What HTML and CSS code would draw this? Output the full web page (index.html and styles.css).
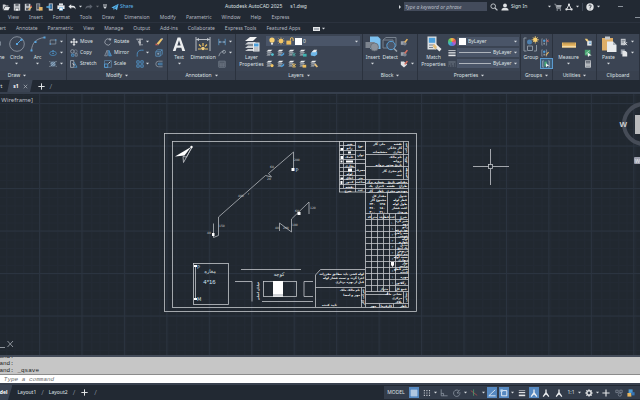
FILE: index.html
```html
<!DOCTYPE html>
<html lang="en">
<head>
<meta charset="UTF-8">
<title>Autodesk AutoCAD 2025 - s1.dwg</title>
<link rel="stylesheet" href="styles.css">
</head>
<body>

<!-- icon sprite -->
<svg class="sprite" aria-hidden="true">
    <symbol id="caret" viewBox="0 0 4 4"><path d="M0 1h4L2 3.4z" fill="#d5d9de"/></symbol>
    <symbol id="open" viewBox="0 0 10 10"><path d="M1 8V2h3l1 1h3v1.4H3.4L1.6 8z" fill="#cfd2d6"/><path d="M3.8 5H10L8 9H1.8z" fill="#e4e6e8"/></symbol>
    <symbol id="save" viewBox="0 0 10 10"><path d="M1 1h8v8.5H1z" fill="#c9ccd0"/><path d="M3 1h4v3H3zM2.8 6h4.4v3.5H2.8z" fill="#6b7178"/><path d="M3.4 7h3.2v2.5H3.4z" fill="#f0f0f0"/></symbol>
    <symbol id="saveas" viewBox="0 0 10 10"><path d="M1 1h7v8.5H1z" fill="#c9ccd0"/><path d="M3 1h3v3H3zM2.5 6h4v3h-4z" fill="#555c66"/><path d="M5 8l3.5-4L10 5.300 6.500 9z" fill="#e7b96e"/><circle cx="9" cy="4" r="1" fill="#d9534f"/></symbol>
    <symbol id="webopen" viewBox="0 0 10 10"><path d="M1.500 0.500h5v9h-5z" fill="#9a9da3"/><path d="M2.500 1.500h3v6h-3z" fill="#565d68"/><path d="M5 5h4.500v4.500H5z" fill="#e3b566"/></symbol>
    <symbol id="websave" viewBox="0 0 10 10"><path d="M3.500 0.500h5v9h-5z" fill="#c3c7cc"/><path d="M4.500 1.500h3v6h-3z" fill="#3a6f9c"/><path d="M0.500 4h3V2.500L6 5 3.500 7.500V6h-3z" fill="#59b1e8"/></symbol>
    <symbol id="print" viewBox="0 0 10 10"><path d="M2.500 0.500h5V3h-5z" fill="#dfe2e5"/><path d="M0.500 3h9v4.500h-9z" fill="#e9ebed"/><path d="M2.500 5.500h5v4h-5z" fill="#6bb2e2"/><path d="M3.200 6.500h3.600v2.500H3.200z" fill="#fff"/></symbol>
    <symbol id="undo" viewBox="0 0 10 10"><path d="M0.500 4.500L4 1.500v2h2c2.500 0 3.500 1.500 3.500 4.500C8.500 6 7.500 5.500 6 5.500H4v2z" fill="#e6e8ea"/></symbol>
    <symbol id="redo" viewBox="0 0 10 10"><path d="M9.500 4.500L6 1.500v2H4C1.500 3.500 0.500 5 0.500 8 1.500 6 2.500 5.500 4 5.500h2v2z" fill="#5b626d"/></symbol>
    <symbol id="more" viewBox="0 0 4 6"><path d="M0 0.500h4v1H0zM0 2.600h4L2 5z" fill="#d5d9de"/></symbol>
    <symbol id="plane" viewBox="0 0 10 10"><path d="M0.500 5.500L9.500 1 7.500 9 4.800 6.800 3.500 9 3 6.500z" fill="#5db8ee"/><path d="M3 6.500L9.500 1 4.800 6.800z" fill="#2d6f9e"/></symbol>
    <symbol id="lens" viewBox="0 0 10 10"><circle cx="4" cy="4" r="2.900" fill="none" stroke="#c0c4c9" stroke-width="1.200"/><path d="M6.200 6.200L9.300 9.300" stroke="#c0c4c9" stroke-width="1.500"/></symbol>
    <symbol id="user" viewBox="0 0 10 10"><circle cx="5" cy="3" r="2.400" fill="#dfe1e4"/><path d="M0.500 9.500C0.500 6.500 3 6 5 6s4.500 0.500 4.500 3.500z" fill="#dfe1e4"/></symbol>
    <symbol id="cart" viewBox="0 0 10 10"><path d="M0.500 1.500h1.600L3.500 7h5" fill="none" stroke="#a3a8af"/><path d="M2.600 2.500h7L8.500 6h-5z" fill="#a3a8af"/><circle cx="4" cy="8.700" r="0.900" fill="#a3a8af"/><circle cx="8" cy="8.700" r="0.900" fill="#a3a8af"/></symbol>
    <symbol id="appstore" viewBox="0 0 10 10"><path d="M5 2L2 8h6z" fill="none" stroke="#dfe1e4" stroke-width="1.200"/><circle cx="5" cy="1.800" r="1.300" fill="#dfe1e4"/><circle cx="1.800" cy="8" r="1.400" fill="#dfe1e4"/><circle cx="8.200" cy="8" r="1.400" fill="#dfe1e4"/></symbol>
    <symbol id="help" viewBox="0 0 10 10"><circle cx="5" cy="5" r="4.600" fill="#e4e6e8"/><path d="M3.600 3.900C3.600 2 6.500 2 6.500 3.800 6.500 4.900 5 4.900 5 6.200M5 7v1" fill="none" stroke="#252c37" stroke-width="1.100"/></symbol>

    <symbol id="pline" viewBox="0 0 16 16"><path d="M3 14V3h5a4.500 4.500 0 0 1 0 9H6" fill="none" stroke="#8d97a5"/></symbol>
    <symbol id="circle" viewBox="0 0 16 16"><circle cx="8" cy="8" r="7.300" fill="none" stroke="#97a0ac" stroke-width="0.800"/><path d="M8 8l4-4" stroke="#57a5e0"/><path d="M7 7h2v2H7zM11.500 2.800h2v2h-2z" fill="#57a5e0"/></symbol>
    <symbol id="arc" viewBox="0 0 16 16"><path d="M1.500 14.500C2 7 6 2.500 14.500 1.500" fill="none" stroke="#97a0ac" stroke-width="0.800"/><path d="M0.500 13.500h2v2h-2zM4.500 5h2v2h-2zM13.500 0.500h2v2h-2z" fill="#57a5e0"/></symbol>
    <symbol id="rect" viewBox="0 0 10 10"><path d="M1.500 2.500h7v5h-7z" fill="none" stroke="#8f99a6" stroke-width="0.900"/><path d="M0.700 6.800h1.600v1.600H0.700zM7.700 1.600h1.600v1.600H7.700z" fill="#57a5e0"/></symbol>
    <symbol id="ellipse" viewBox="0 0 10 10"><ellipse cx="5" cy="5.500" rx="4.200" ry="2.700" fill="none" stroke="#4b93c9" stroke-width="0.900"/><path d="M4.300 4.800h1.500v1.500H4.300zM4.300 1.500h1.500V3H4.300z" fill="#57a5e0"/></symbol>
    <symbol id="hatch" viewBox="0 0 10 10"><path d="M2 2h6v6H2z" fill="#62809c"/><path d="M2 5l3-3M2 8l6-6M5 8l3-3" stroke="#b9c3cf" stroke-width="0.700"/><path d="M0.500 2h1M8.500 2h1M0.500 8h1M8.500 8h1" stroke="#aab2bd"/></symbol>
    <symbol id="move" viewBox="0 0 10 10"><path d="M5 0l2 2.300H5.700v2h2V3L10 5 7.700 7V5.700h-2v2H7L5 10 3 7.700h1.300v-2h-2V7L0 5l2.300-2v1.300h2v-2H3z" fill="#e8eaec"/></symbol>
    <symbol id="copy" viewBox="0 0 10 10"><circle cx="3" cy="3" r="2.200" fill="none" stroke="#98a2af"/><circle cx="7" cy="3" r="2" fill="none" stroke="#7f8a98" stroke-width="0.800"/><path d="M2 6.500h3v2.500H2z" fill="none" stroke="#4f9bd3"/><path d="M6.500 5.500h2.500v3.500H6.500z" fill="none" stroke="#98a2af" stroke-width="0.800"/></symbol>
    <symbol id="stretch" viewBox="0 0 10 10"><path d="M0.700 0.700h4v8.500h-4z" fill="none" stroke="#b4bbc4" stroke-width="0.900"/><path d="M5 2.500L8.800 9H5" fill="none" stroke="#4f9bd3"/><path d="M3 4.500l3 2" stroke="#e4e6e8"/></symbol>
    <symbol id="rotate" viewBox="0 0 10 10"><path d="M8.300 7A3.900 3.900 0 1 1 7 1.700" fill="none" stroke="#a9b0ba"/><path d="M6 0.300L9.500 1 7.500 4z" fill="#a9b0ba"/></symbol>
    <symbol id="mirror" viewBox="0 0 10 10"><path d="M4 1.500V8.500H0.800z" fill="none" stroke="#98a2af" stroke-width="0.900"/><path d="M6 1.500V8.500h3.200z" fill="#3c6f98" stroke="#57a5e0" stroke-width="0.900"/></symbol>
    <symbol id="scale" viewBox="0 0 10 10"><path d="M0.700 0.700h8.500v8.500H0.700z" fill="none" stroke="#5c86aa" stroke-width="0.900"/><path d="M0.700 5h4v4.200h-4z" fill="none" stroke="#57a5e0"/><path d="M5.500 4.500L8 2" stroke="#dfe1e4"/></symbol>
    <symbol id="trim" viewBox="0 0 10 10"><path d="M0.500 1.500h3M6.500 1.500h2" stroke="#dfe1e4"/><path d="M5 0.500V9.500" stroke="#e4e6e8" stroke-width="1.400"/><path d="M2 3.500l4 2.500M2.500 6h3" stroke="#c3c8ce"/><path d="M6.500 8.500h2" stroke="#c3c8ce"/></symbol>
    <symbol id="erase" viewBox="0 0 10 10"><path d="M2 7L7.500 0.500 9.500 2 4.500 8.500z" fill="#ecc46e"/><path d="M7.500 0.500L9.500 2l0.500-1.500z" fill="#fff"/><path d="M1 6.500l3.500 2.500H0.500z" fill="#d8625a"/></symbol>
    <symbol id="fillet" viewBox="0 0 10 10"><path d="M1.500 9.500V7A5 5 0 0 1 7 1.500h2.500" fill="none" stroke="#4f9bd3"/></symbol>
    <symbol id="cube" viewBox="0 0 10 10"><path d="M1 3.500h5.500v5.500H1zM1 3.500l2-2.500h6L6.500 3.500M9 1v5.500L6.500 9" fill="none" stroke="#5a95c4"/><circle cx="4" cy="6" r="1.300" fill="#8ea3b6"/></symbol>
    <symbol id="array" viewBox="0 0 10 10"><path d="M1 1h3v3H1zM6 1h3v3H6zM1 6h3v3H1zM6 6h3v3H6z" fill="none" stroke="#4f8ebf" stroke-width="1.200"/></symbol>
    <symbol id="offset" viewBox="0 0 10 10"><path d="M9.500 1.500H4.500a3.500 3.500 0 0 0 0 7H9.500" fill="none" stroke="#8f99a6"/><path d="M9.500 4H5a1 1 0 0 0 0 2h4.500" fill="none" stroke="#4f9bd3"/></symbol>

    <symbol id="text" viewBox="0 0 16 16"><path d="M1.800 15L6.600 1.500h2.800L14.200 15h-2.900l-1-3.200H5.600L4.600 15zM6.300 9.400h3.400L8 4.300z" fill="#eceef0"/></symbol>
    <symbol id="dimension" viewBox="0 0 16 16"><path d="M1 1v14M15 1v14" stroke="#c5cad0" stroke-width="0.900"/><path d="M1.500 3.500h13" stroke="#c5cad0" stroke-width="0.900"/><path d="M1 3.500l3-1.500v3zM15 3.500l-3-1.500v3z" fill="#c5cad0"/><path d="M8 7v3M4 8.500l2 2M12 8.500l-2 2M3 13h3M10 13h3" stroke="#e9be62" stroke-width="1.200"/><circle cx="8" cy="12.500" r="1.800" fill="#f0cc7b"/></symbol>
    <symbol id="linear" viewBox="0 0 10 10"><path d="M1 1v8M9 1v8M1 5h8" stroke="#5a9bcc"/><path d="M1 5l2-1.500v3zM9 5L7 3.500v3z" fill="#aab2bd"/></symbol>
    <symbol id="leader" viewBox="0 0 10 10"><path d="M1 9C2 5 4 3 7 3" fill="none" stroke="#a0a9b4"/><circle cx="7.500" cy="3.500" r="1.900" fill="none" stroke="#a0a9b4"/></symbol>
    <symbol id="tableicon" viewBox="0 0 10 10"><path d="M1 1.500h8V9H1zM1 3.800h8M1 6.300h8M3.700 4v5M6.400 4v5" fill="none" stroke="#7d8794" stroke-width="0.900"/></symbol>

    <symbol id="layers" viewBox="0 0 16 16"><path d="M1 5l5-4h7l-4 4z" fill="#f2f3f4"/><path d="M1 8.500L4 6h8l-3 2.500zM1 12l3-2.500h7L9 12zM1 15l3-2h6l-1 2z" fill="#c9cdd2"/><path d="M9 6.500h6.500V15.500H9z" fill="#e8eaec"/><path d="M10 7.500h4.500v3H10z" fill="#4b9fdc"/><path d="M10 12h4.500M10 14h4.500" stroke="#7c838d" stroke-width="0.800"/></symbol>
    <symbol id="bulb" viewBox="0 0 10 10"><circle cx="5" cy="3.800" r="3.300" fill="#f6cf73"/><path d="M3.700 7.200h2.600v2.300H3.700z" fill="#e2e4e6"/></symbol>
    <symbol id="sun" viewBox="0 0 10 10"><circle cx="5" cy="5" r="2.800" fill="#f3c766"/><path d="M5 0.500v9M0.500 5h9M1.800 1.800l6.400 6.400M8.200 1.800L1.800 8.200" stroke="#f3c766" stroke-width="0.800"/></symbol>
    <symbol id="lock" viewBox="0 0 10 10"><path d="M0.500 4.500h6V9.500h-6z" fill="#eebe5d"/><path d="M5.500 4.500V2.500a1.700 1.700 0 0 1 3.400 0V5" fill="none" stroke="#eebe5d" stroke-width="1.200"/></symbol>
    <symbol id="lay" viewBox="0 0 10 10"><path d="M0.500 3L3 1h5L5.500 3z" fill="#e8eaec"/><path d="M0.500 5.500L2 4h5.500L6 5.500zM0.500 8L2 6.500h4L5 8z" fill="#aeb4bc"/></symbol>

    <symbol id="insert" viewBox="0 0 16 16"><path d="M5 0.500h8l2.500 2.500v10H5z" fill="#7cc0ef"/><path d="M0.500 6h9v6h-9z" fill="#7d848e"/><circle cx="9.500" cy="11" r="4" fill="#8c939c" stroke="#5d656f" stroke-width="0.700"/></symbol>
    <symbol id="detect" viewBox="0 0 16 16"><path d="M1 4l3-2.500h10V10l-2.500 2H1z" fill="none" stroke="#78828f"/><path d="M1 4h10v8" fill="none" stroke="#78828f"/><circle cx="9" cy="9.500" r="4.200" fill="#4a5668" stroke="#58a2da"/><path d="M12 12.500l3 3" stroke="#9ca4ae" stroke-width="1.500"/></symbol>
    <symbol id="blk" viewBox="0 0 10 10"><path d="M1 4h5v4.500H1z" fill="#9aa1ab"/><circle cx="6" cy="7" r="2.300" fill="#7c8490"/><path d="M5 5l3.500-4L10 2 7 6z" fill="#e7b661"/></symbol>
    <symbol id="blkedit" viewBox="0 0 10 10"><path d="M1 4h5v4.500H1z" fill="#9aa1ab"/><circle cx="6" cy="7" r="2.300" fill="#7c8490"/><path d="M5 5l3.500-4L10 2 7 6z" fill="#db7161"/></symbol>
    <symbol id="tag" viewBox="0 0 10 10"><path d="M1 2h4l4 3.500L5 9.500 1 6z" fill="#dfe1e4"/><path d="M5 5l3.500-4L10 2 7 6z" fill="#db7161"/></symbol>

    <symbol id="match" viewBox="0 0 16 16"><path d="M1.500 0.500h9v13h-9z" fill="#dde0e3"/><path d="M2.800 1.800h6.400v5H2.800z" fill="#4b9fdc"/><path d="M3 9h6M3 11.500h4" stroke="#7c838d"/><path d="M7 9.500l2.500-2L15.500 13l-2 2.500z" fill="#ececec"/><path d="M6.500 10l2-2 2.500 3-1.500 2.500z" fill="#e5bf7a"/></symbol>
    <symbol id="lweight" viewBox="0 0 10 10"><path d="M0.500 2h9" stroke="#e4e6e8"/><path d="M0.500 4.800h9" stroke="#e4e6e8" stroke-width="1.600"/><path d="M0.500 8h9" stroke="#e4e6e8" stroke-width="2"/></symbol>
    <symbol id="ltype" viewBox="0 0 10 10"><path d="M0.500 2.500h9" stroke="#828b97"/><path d="M0.500 5h9" stroke="#828b97" stroke-dasharray="3 1"/><path d="M0.500 7.500h9" stroke="#828b97" stroke-dasharray="1 1"/></symbol>

    <symbol id="group" viewBox="0 0 16 16"><path d="M3.500 2H1v13h2.500M11 15h2.500V9" fill="none" stroke="#8a94a1"/><circle cx="6.500" cy="6" r="2.500" fill="#4d7fae"/><path d="M4.500 10h5v4.500h-5z" fill="none" stroke="#8a94a1"/><circle cx="12.300" cy="3.800" r="2.200" fill="#f6cf73"/><path d="M12.300 0v7.600M8.500 3.800H16M9.800 1.200l5 5M14.800 1.200l-5 5" stroke="#f6cf73" stroke-width="0.700"/></symbol>
    <symbol id="grp1" viewBox="0 0 10 10"><path d="M2 1H1v8h1M6 1h1v8H6" fill="none" stroke="#8a94a1"/><circle cx="4" cy="3.500" r="1.500" fill="#4f9bd3"/><path d="M3 6h2v2H3z" fill="#8a94a1"/><path d="M7 2l2.500 3M9.500 2L7 5" stroke="#d9635a"/></symbol>
    <symbol id="grp2" viewBox="0 0 10 10"><path d="M2 1H1v8h1M6 1h1v8H6" fill="none" stroke="#8a94a1"/><circle cx="4" cy="3.500" r="1.500" fill="#4f9bd3"/><path d="M3 6h2v2H3z" fill="#8a94a1"/><path d="M6 8l3.500-4" stroke="#e7b661" stroke-width="1.400"/></symbol>
    <symbol id="grp3" viewBox="0 0 10 10"><path d="M2 1H1v8h1M8 1h1v8H8" fill="none" stroke="#b5bdc7"/><path d="M3 2h3v6H3z" fill="#4aa97a"/><path d="M5 4l4 3.500H6.500L5 9.500z" fill="#f2f3f4"/></symbol>
    <symbol id="measure" viewBox="0 0 16 16"><path d="M1 6.500h14v5H1z" fill="#e9b864"/><path d="M3 6.500v2M5 6.500v2M7 6.500v2M9 6.500v2M11 6.500v2M13 6.500v2" stroke="#7d6133" stroke-width="0.600"/><path d="M1 10h14v1.500H1z" fill="#f5dba6"/></symbol>
    <symbol id="paint" viewBox="0 0 10 10"><path d="M4 3.500h5.500v6H4z" fill="#e9ebed"/><path d="M1 1h3l2 3H3z" fill="#f0cc7b"/><path d="M6 5h3M6 7h3" stroke="#4f9bd3"/></symbol>
    <symbol id="qselect" viewBox="0 0 10 10"><path d="M1 1h7v7H1z" fill="#46a36f"/><path d="M2 6l5-4" stroke="#a9e0c2"/><path d="M4.500 4.500L9.500 8H7L5 10z" fill="#f2f3f4"/></symbol>
    <symbol id="calc" viewBox="0 0 10 10"><path d="M1.500 0.500h7v9h-7z" fill="#dcdfe2"/><path d="M2.500 1.500h5v1.700h-5zM2.500 4.500h5M2.500 6.300h5M2.500 8h5" fill="#59616c" stroke="#59616c" stroke-width="0.700"/></symbol>
    <symbol id="paste" viewBox="0 0 16 16"><path d="M1 2h11v12.500H1z" fill="#dfae67"/><path d="M4 0.500h5v3H4z" fill="#c4c8cd"/><path d="M6 5.500h6l3.500 3.500v7H6z" fill="#e9ebed"/><path d="M12 5.500V9h3.500z" fill="#aeb4bc"/></symbol>
    <symbol id="cut" viewBox="0 0 10 10"><path d="M1 1h6v8H1z" fill="#c3c8ce"/><path d="M2 3h4M2 5h3" stroke="#59616c" stroke-width="0.800"/><path d="M5 5l4 4M9 5L5 9" stroke="#e4e6e8"/></symbol>
    <symbol id="copyclip" viewBox="0 0 10 10"><path d="M1 0.500h5v6H1z" fill="#9aa1ab"/><path d="M3 2.500h4L9 4.500v5H3z" fill="#e4e6e8"/></symbol>

    <symbol id="sgrid" viewBox="0 0 10 10"><path d="M0.500 2.500h9M0.500 5h9M0.500 7.500h9M2.500 0.500v9M5 0.500v9M7.500 0.500v9" stroke="#fff" stroke-width="0.800"/></symbol>
    <symbol id="ssnap" viewBox="0 0 10 10"><path d="M1 2h8M1 5h8M1 8h8" stroke="#c9cdd3" stroke-width="1.400" stroke-dasharray="1.400 1.800"/></symbol>
    <symbol id="sortho" viewBox="0 0 10 10"><path d="M1.500 0.500v8h8M1.500 5.500h3v3" fill="none" stroke="#8b95a2"/></symbol>
    <symbol id="spolar" viewBox="0 0 10 10"><path d="M8.500 6.500A4 4 0 1 1 7 2M5 5h4.500M5 5L8.500 1" fill="none" stroke="#8b95a2"/></symbol>
    <symbol id="siso" viewBox="0 0 10 10"><path d="M1 2l8 6" stroke="#b0504e"/><path d="M4.500 0.500v8" stroke="#4f9d71"/></symbol>
    <symbol id="strack" viewBox="0 0 10 10"><path d="M1 8.500L9 1M1 8.500h8.500" stroke="#fff" stroke-width="0.900"/></symbol>
    <symbol id="sosnap" viewBox="0 0 10 10"><path d="M2 2h6.500v6.500H2z" fill="none" stroke="#fff"/><path d="M0.500 0.500h3v3h-3z" fill="#bcd9f2"/></symbol>
    <symbol id="slw" viewBox="0 0 10 10"><path d="M1 2h8" stroke="#e4e6e8" stroke-width="0.800"/><path d="M1 4.500h8" stroke="#e4e6e8" stroke-width="1.400"/><path d="M1 8h8" stroke="#e4e6e8" stroke-width="2"/></symbol>
    <symbol id="sanno" viewBox="0 0 10 10"><path d="M5 0.500V5M5 4.500L1.500 9.500M5 4.500l3.500 5" stroke="#eef0f2" stroke-width="1.600" fill="none"/><path d="M3 7h4" stroke="#eef0f2"/></symbol>
    <symbol id="sgear" viewBox="0 0 10 10"><circle cx="5" cy="5" r="2.700" fill="none" stroke="#e4e6e8" stroke-width="1.800"/><path d="M5 0.300v2M5 7.700v2M0.300 5h2M7.700 5h2M1.700 1.700l1.400 1.400M6.900 6.900l1.400 1.400M8.300 1.700L6.900 3.100M3.100 6.900L1.700 8.300" stroke="#e4e6e8" stroke-width="1.300"/></symbol>
    <symbol id="plus" viewBox="0 0 10 10"><path d="M5 0.500v9M0.500 5h9" stroke="#e4e6e8" stroke-width="1.400"/></symbol>
    <symbol id="sisolate" viewBox="0 0 10 10"><path d="M1 1.500h3v3H1zM6 1.500h3v3H6z" fill="none" stroke="#7d8794"/><circle cx="6" cy="7" r="2" fill="none" stroke="#7d8794"/></symbol>
    <symbol id="sgpu" viewBox="0 0 10 10"><path d="M2 0.500h5v4.500H2z" fill="#4f9bd3"/><path d="M0.500 5h5v4.500h-5z" fill="#e7b661"/><path d="M5.500 4h4v4h-4z" fill="#3474b5"/></symbol>
    <symbol id="close" viewBox="0 0 10 10"><path d="M1.500 1.500l7 7M8.500 1.500l-7 7" stroke="#b6bcc4" stroke-width="1.300"/></symbol>
</svg>

<header class="titlebar">
    <div class="quick">
        <button aria-label="Open"><svg class="ico"><use href="#open"/></svg></button>
        <button aria-label="Save"><svg class="ico"><use href="#save"/></svg></button>
        <button aria-label="Save As"><svg class="ico"><use href="#saveas"/></svg></button>
        <button aria-label="Open from Web"><svg class="ico"><use href="#webopen"/></svg></button>
        <button aria-label="Save to Web"><svg class="ico"><use href="#websave"/></svg></button>
        <button aria-label="Plot"><svg class="ico"><use href="#print"/></svg></button>
        <button aria-label="Undo"><svg class="ico"><use href="#undo"/></svg></button>
        <svg class="caret"><use href="#caret"/></svg>
        <button aria-label="Redo"><svg class="ico"><use href="#redo"/></svg></button>
        <svg class="caret dim"><use href="#caret"/></svg>
        <button class="more-btn" aria-label="Customize"><svg class="more"><use href="#more"/></svg></button>
        <a class="share" href="#"><svg class="ico"><use href="#plane"/></svg>Share</a>
    </div>
    <div class="doc-title"><span>Autodesk AutoCAD 2025</span><span>s1.dwg</span></div>
    <div class="account">
        <span class="tri"></span>
        <input class="search" type="text" placeholder="Type a keyword or phrase" aria-label="Search">
        <button aria-label="Search"><svg class="ico"><use href="#lens"/></svg></button>
        <button class="signin"><svg class="ico"><use href="#user"/></svg>Sign In</button>
        <svg class="caret gap-left"><use href="#caret"/></svg>
        <button aria-label="Store"><svg class="ico"><use href="#cart"/></svg></button>
        <button aria-label="Apps"><svg class="ico"><use href="#appstore"/></svg></button>
        <svg class="caret"><use href="#caret"/></svg>
        <span class="sep"></span>
        <button aria-label="Help"><svg class="ico"><use href="#help"/></svg></button>
        <svg class="caret"><use href="#caret"/></svg>
        <button class="minimize" aria-label="Minimize"></button>
    </div>
</header>

<nav class="menubar">
    <a href="#">View</a><a href="#">Insert</a><a href="#">Format</a><a href="#">Tools</a><a href="#">Draw</a><a href="#">Dimension</a><a href="#">Modify</a><a href="#">Parametric</a><a href="#">Window</a><a href="#">Help</a><a href="#">Express</a>
    <button class="minimize" aria-label="Minimize drawing"></button>
</nav>

<nav class="ribbon-tabs">
    <a href="#">Insert</a><a href="#">Annotate</a><a href="#">Parametric</a><a href="#">View</a><a href="#">Manage</a><a href="#">Output</a><a href="#">Add-ins</a><a href="#">Collaborate</a><a href="#">Express Tools</a><a href="#">Featured Apps</a>
    <button class="ribbon-toggle" aria-label="Minimize ribbon"><span></span><svg class="caret"><use href="#caret"/></svg></button>
</nav>

<main class="ribbon">
    <section class="panel">
        <div class="tools right">
            <button class="big"><svg class="pic"><use href="#pline"/></svg>Polyline<svg class="caret"><use href="#caret"/></svg></button>
            <button class="big"><svg class="pic"><use href="#circle"/></svg>Circle<svg class="caret"><use href="#caret"/></svg></button>
            <button class="big"><svg class="pic"><use href="#arc"/></svg>Arc<svg class="caret"><use href="#caret"/></svg></button>
            <div class="stack">
                <button aria-label="Rectangle"><svg class="ico"><use href="#rect"/></svg><svg class="caret"><use href="#caret"/></svg></button>
                <button aria-label="Ellipse"><svg class="ico"><use href="#ellipse"/></svg><svg class="caret"><use href="#caret"/></svg></button>
                <button aria-label="Hatch"><svg class="ico"><use href="#hatch"/></svg><svg class="caret"><use href="#caret"/></svg></button>
            </div>
        </div>
        <h2>Draw <svg class="caret"><use href="#caret"/></svg></h2>
    </section>

    <section class="panel">
        <div class="tools modify">
            <button><svg class="ico"><use href="#move"/></svg>Move</button>
            <button><svg class="ico"><use href="#rotate"/></svg>Rotate</button>
            <button aria-label="Trim"><svg class="ico"><use href="#trim"/></svg><svg class="caret"><use href="#caret"/></svg></button>
            <button aria-label="Erase"><svg class="ico"><use href="#erase"/></svg></button>
            <button><svg class="ico"><use href="#copy"/></svg>Copy</button>
            <button><svg class="ico"><use href="#mirror"/></svg>Mirror</button>
            <button aria-label="Fillet"><svg class="ico"><use href="#fillet"/></svg><svg class="caret"><use href="#caret"/></svg></button>
            <button aria-label="Explode"><svg class="ico"><use href="#cube"/></svg></button>
            <button><svg class="ico"><use href="#stretch"/></svg>Stretch</button>
            <button><svg class="ico"><use href="#scale"/></svg>Scale</button>
            <button aria-label="Array"><svg class="ico"><use href="#array"/></svg><svg class="caret"><use href="#caret"/></svg></button>
            <button aria-label="Offset"><svg class="ico"><use href="#offset"/></svg></button>
        </div>
        <h2>Modify <svg class="caret"><use href="#caret"/></svg></h2>
    </section>

    <section class="panel">
        <div class="tools">
            <button class="big"><svg class="pic"><use href="#text"/></svg>Text<svg class="caret"><use href="#caret"/></svg></button>
            <button class="big wide"><svg class="pic"><use href="#dimension"/></svg>Dimension</button>
            <div class="stack">
                <button aria-label="Linear"><svg class="ico"><use href="#linear"/></svg><svg class="caret"><use href="#caret"/></svg></button>
                <button aria-label="Leader"><svg class="ico"><use href="#leader"/></svg><svg class="caret"><use href="#caret"/></svg></button>
                <button aria-label="Table"><svg class="ico"><use href="#tableicon"/></svg></button>
            </div>
        </div>
        <h2>Annotation <svg class="caret"><use href="#caret"/></svg></h2>
    </section>

    <section class="panel">
        <div class="tools">
            <button class="big wide"><svg class="pic"><use href="#layers"/></svg>Layer<br>Properties</button>
            <div class="layer-tools">
                <label class="combo">
                    <svg class="ico"><use href="#bulb"/></svg><svg class="ico"><use href="#sun"/></svg><svg class="ico"><use href="#lock"/></svg><span class="swatch"></span>
                    <select aria-label="Layer"><option>0</option></select>
                    <svg class="caret"><use href="#caret"/></svg>
                </label>
                <div class="layer-row">
                    <button aria-label="Off"><svg class="ico" viewBox="0 0 10 10"><use href="#lay"/><circle cx="8" cy="7" r="1.800" fill="#53c0cf"/></svg></button>
                    <button aria-label="Isolate"><svg class="ico" viewBox="0 0 10 10"><use href="#lay"/><path d="M4 8l5-4v3L6 9z" fill="#4f9bd3"/></svg></button>
                    <button aria-label="Freeze"><svg class="ico" viewBox="0 0 10 10"><use href="#lay"/><path d="M7.500 4.500v5M5.500 5.500l4 3M9.500 5.500l-4 3" stroke="#4fa9a5"/></svg></button>
                    <button aria-label="Lock"><svg class="ico" viewBox="0 0 10 10"><use href="#lay"/><path d="M5 6h4.500v3.500H5z" fill="#3fb3b0"/></svg></button>
                    <button aria-label="Make Current"><svg class="ico" viewBox="0 0 10 10"><path d="M1 5l3-3 5 1v4L6 9 1 8z" fill="#6db6e8"/><path d="M2 4l3-3h4L7 4z" fill="#e8eaec"/></svg></button>
                </div>
                <div class="layer-row">
                    <button aria-label="Turn On"><svg class="ico" viewBox="0 0 10 10"><use href="#lay"/><circle cx="7.500" cy="7" r="2" fill="#f3c766"/></svg></button>
                    <button aria-label="Unisolate"><svg class="ico" viewBox="0 0 10 10"><use href="#lay"/><path d="M4 8l5-4v3L6 9z" fill="#4f9bd3"/></svg></button>
                    <button aria-label="Thaw"><svg class="ico" viewBox="0 0 10 10"><use href="#lay"/><path d="M7.500 4v6M5 5l5 4M10 5L5 9" stroke="#f3c766"/></svg></button>
                    <button aria-label="Unlock"><svg class="ico" viewBox="0 0 10 10"><use href="#lay"/><path d="M4.500 6H9v3.500H4.500z" fill="#eebe5d"/></svg></button>
                    <button aria-label="Match Layer"><svg class="ico" viewBox="0 0 10 10"><use href="#lay"/><path d="M5 6l2-1.500L10 8 8.500 9.500z" fill="#e5bf7a"/></svg></button>
                </div>
            </div>
        </div>
        <h2>Layers <svg class="caret"><use href="#caret"/></svg></h2>
    </section>

    <section class="panel">
        <div class="tools">
            <button class="big slim"><svg class="pic"><use href="#insert"/></svg>Insert<svg class="caret"><use href="#caret"/></svg></button>
            <button class="big slim"><svg class="pic"><use href="#detect"/></svg>Detect</button>
            <div class="stack">
                <button aria-label="Create Block"><svg class="ico"><use href="#blk"/></svg></button>
                <button aria-label="Edit Block"><svg class="ico"><use href="#blkedit"/></svg></button>
                <button aria-label="Edit Attributes"><svg class="ico"><use href="#tag"/></svg><svg class="caret"><use href="#caret"/></svg></button>
            </div>
        </div>
        <h2>Block <svg class="caret"><use href="#caret"/></svg></h2>
    </section>

    <section class="panel">
        <div class="tools">
            <button class="big wide"><svg class="pic"><use href="#match"/></svg>Match<br>Properties</button>
            <div class="props">
                <span class="wheel"></span>
                <label class="combo"><span class="swatch"></span><select aria-label="Color"><option>ByLayer</option></select><svg class="caret"><use href="#caret"/></svg></label>
                <svg class="ico"><use href="#lweight"/></svg>
                <label class="combo"><span class="sample"></span><select aria-label="Lineweight"><option>ByLayer</option></select><svg class="caret"><use href="#caret"/></svg></label>
                <svg class="ico"><use href="#ltype"/></svg>
                <label class="combo"><span class="sample"></span><select aria-label="Linetype"><option>ByLayer</option></select><svg class="caret"><use href="#caret"/></svg></label>
            </div>
        </div>
        <h2>Properties <svg class="caret"><use href="#caret"/></svg></h2>
    </section>

    <section class="panel">
        <div class="tools">
            <button class="big slim"><svg class="pic"><use href="#group"/></svg>Group</button>
            <div class="stack">
                <button aria-label="Ungroup"><svg class="ico"><use href="#grp1"/></svg></button>
                <button aria-label="Group Edit"><svg class="ico"><use href="#grp2"/></svg></button>
                <button class="on" aria-label="Group Selection"><svg class="ico"><use href="#grp3"/></svg></button>
            </div>
        </div>
        <h2>Groups <svg class="caret"><use href="#caret"/></svg></h2>
    </section>

    <section class="panel">
        <div class="tools">
            <button class="big wide"><svg class="pic"><use href="#measure"/></svg>Measure<svg class="caret"><use href="#caret"/></svg></button>
            <div class="stack">
                <button aria-label="Quick Select"><svg class="ico"><use href="#paint"/></svg></button>
                <button aria-label="Select All"><svg class="ico"><use href="#qselect"/></svg></button>
                <button aria-label="Calculator"><svg class="ico"><use href="#calc"/></svg></button>
            </div>
        </div>
        <h2>Utilities <svg class="caret"><use href="#caret"/></svg></h2>
    </section>

    <section class="panel">
        <div class="tools">
            <button class="big"><svg class="pic"><use href="#paste"/></svg>Paste<svg class="caret"><use href="#caret"/></svg></button>
            <div class="stack">
                <button aria-label="Cut"><svg class="ico"><use href="#cut"/></svg><svg class="caret"><use href="#caret"/></svg></button>
                <button aria-label="Copy Clip"><svg class="ico"><use href="#copyclip"/></svg><svg class="caret"><use href="#caret"/></svg></button>
            </div>
        </div>
        <h2>Clipboard</h2>
    </section>
</main>

<nav class="file-tabs">
    <a href="#">Start</a>
    <a href="#" class="current">s1 <svg class="x"><use href="#close"/></svg></a>
    <button aria-label="New drawing"><svg class="add"><use href="#plus"/></svg></button>
    <span class="slash">/</span>
</nav>

<div class="canvas">
<svg class="drawing" viewBox="0 94 640 261" preserveAspectRatio="xMidYMid slice">
    <defs>
        <pattern id="minor" x="6" y="103.500" width="8.500" height="8.500" patternUnits="userSpaceOnUse"><path d="M0 0.500h8.500M0.500 0v8.500" stroke="#232a34" fill="none"/></pattern>
        <pattern id="major" x="39" y="103" width="42.450" height="42.500" patternUnits="userSpaceOnUse"><path d="M0 0.500h42.500M0.500 0v42.500" stroke="#2b3440" fill="none"/></pattern>
    </defs>
    <rect x="0" y="94" width="640" height="261" fill="url(#minor)"/>
    <rect x="0" y="94" width="640" height="261" fill="url(#major)"/>

    <text class="label" x="-10" y="102">[2D Wireframe]</text>

    <!-- sheet frame -->
    <g class="line">
        <rect x="164.500" y="133.500" width="252" height="178"/>
        <rect x="172.500" y="141.500" width="236" height="166"/>
    </g>

    <!-- north arrow -->
    <path d="M175 156.500L191 147l-6.500 8.500z" fill="#fff"/>
    <path d="M183 156.500l0.500 6 8-14.500-5 9z" class="line"/>
    <circle cx="191.500" cy="147" r="1.200" fill="#fff"/>

    <!-- isometric pipe runs -->
    <g class="pipe">
        <path d="M293.500 169v-17L268.500 173.500l3 3.500-6-1.500L218.500 217v18.500l-5 2v-14"/>
        <path d="M309 214v-12L291.500 219v13L279.500 223v8"/>
    </g>
    <path d="M291.500 168h3v3h-3zM297.500 212h3v3h-3zM212 233h2.500v3H212z" fill="#fff"/>
    <g class="tiny">
        <text x="294" y="161">200</text>
        <text x="270" y="168">60</text>
        <text x="267" y="180">20</text>
        <text x="238" y="197">400</text>
        <text x="248" y="195">r</text>
        <text x="219" y="227">150</text>
        <text x="207" y="234">40</text>
        <text x="310" y="209">120</text>
        <text x="295" y="212">60</text>
        <text x="292" y="226">100</text>
        <text x="275" y="229">40</text>
        <text x="283" y="229">200</text>
    </g>
    <text class="note blue" x="295.500" y="172">P</text>

    <!-- key plan -->
    <g class="line">
        <rect x="193.500" y="263.500" width="35" height="41"/>
        <path d="M195.500 266v33M241 269.500h60M235 281.500h17v20M262 301.500h51M313 281.500h-9v15h9"/>
        <rect x="263.500" y="281.500" width="33" height="15"/>
    </g>
    <path d="M273 281h10v16h-10zM194 265h3v2h-3zM194 298h3v2h-3z" fill="#fff"/>
    <path d="M273 294h10v2.500h-10z" fill="#cfd2d6"/>
    <text class="note blue" x="197" y="268.500">P</text>
    <text class="note" x="197" y="301">M</text>
    <text class="note" x="210" y="273" text-anchor="middle">مغازه</text>
    <text class="dim-text" x="209.500" y="284" text-anchor="middle">4*16</text>
    <text class="note" x="279" y="276" text-anchor="middle">کوچه</text>
    <text class="cell" x="0" y="0" text-anchor="middle" transform="translate(259 291) rotate(-90)">خیابان اصلی</text>

    <!-- notes box -->
    <path class="line" d="M315.500 307v-32l5-5.500H365M315.500 287.500H365M361.500 287.500V307"/>
    <g class="cell" text-anchor="start">
        <text x="364" y="275">لوله کشی باید مطابق مقررات</text>
        <text x="364" y="279">اجرا گردد و تست فشار لوله</text>
        <text x="364" y="283">قبل از بهره برداری</text>
        <text x="360" y="291">نام مالک ملک</text>
        <text x="360" y="296">مهر و امضا</text>
        <text x="337" y="306">تایید کننده</text>
        <text x="0" y="0" text-anchor="middle" transform="translate(364 297) rotate(-90)">شرکت گاز</text>
    </g>

    <!-- legend table -->
    <g class="line">
        <rect x="339.500" y="141.500" width="26" height="50.500"/>
        <path d="M343.500 141.500V188M355.500 141.500V192M339.500 145.500h16M339.500 150.500h26M339.500 154.500h16M339.500 159.500h26M339.500 163.500h26M339.500 167.500h16M339.500 171.500h16M339.500 175.500h26M339.500 179.500h26M339.500 184.500h26M339.500 188.500h26"/>
    </g>
    <path d="M348 151.500h3v2h-3zM348 168.500h4v3h-4zM340.500 148h2.500v2.500h-2.500zM340.500 156h2.500v3h-2.500zM340.500 160.500h2v2h-2zM340.500 177.500h2.500v2h-2.500zM340.500 181h2v3h-2zM346 160.500h7v2h-7z" fill="#fff"/>
    <g class="cell" text-anchor="middle">
        <text x="349.500" y="145">شیر</text><text x="349.500" y="149">زانو</text><text x="349.500" y="158">علمک</text><text x="349.500" y="167">بخاری</text><text x="349.500" y="175">لوله</text><text x="349.500" y="179">اجاق</text><text x="349.500" y="183">کنتور</text><text x="349.500" y="188">نقشه</text><text x="348" y="191.500">شرح</text>
        <text x="360.500" y="147">نوع</text><text x="360.500" y="156">توان</text><text x="360.500" y="171">مصرف</text><text x="360.500" y="179">متر</text><text x="360.500" y="183">ساعت</text><text x="360.500" y="191">عدد</text>
    </g>

    <!-- title block -->
    <g class="line">
        <path d="M365.500 141.500V307M365.500 154.500h43M365.500 166.500h43M365.500 179.500h43M365.500 183.500h43M365.500 188.500h43M365.500 192.500h43M365.500 213.500h43M365.500 219.500h43M403.500 141.500v38M387.500 192.500v21"/>
        <path d="M371.500 213.500v78M377.500 213.500v78M383.500 213.500v78M389.500 213.500v78M395.500 213.500v78M365.500 225.500h43M365.500 231.500h43M365.500 237.500h43M365.500 243.500h43M365.500 249.500h43M365.500 255.500h43M365.500 261.500h43M365.500 267.500h43M365.500 273.500h43M365.500 279.500h43M365.500 285.500h43M365.500 291.500h43M365.500 294.500h22v-3M403.500 291.500v12M365.500 303.500h43M379.500 303.500v4M393.500 303.500v4"/>
    </g>
    <g class="cell" text-anchor="start">
        <text x="402" y="145">نقشه</text><text x="402" y="149">گاز خانگی</text><text x="402" y="153">تجاری</text><text x="385" y="145">ملی گاز</text><text x="387" y="153">مشخصات</text>
        <text x="402" y="158">نام مالک</text><text x="402" y="162">پروانه</text><text x="402" y="166">تاریخ صدور پروانه</text>
        <text x="402" y="172">نام مجری گاز</text><text x="402" y="176">ثبت</text>
        <text x="407" y="183">مقیاس</text><text x="395" y="183">تاریخ</text><text x="384" y="183">شماره</text><text x="373" y="183">برگ</text>
        <text x="407" y="187">طراح</text><text x="395" y="187">نقشه</text><text x="384" y="187">کنترل</text><text x="373" y="187">یک</text>
        <text x="407" y="192">مهندس</text><text x="395" y="192">مجری</text><text x="384" y="192">ناظر</text><text x="373" y="192">گاز</text>
        <text x="407" y="197">جدول</text><text x="386" y="197">مقدار کل</text>
        <text x="407" y="201">قطر لوله</text><text x="386" y="201">مجموع گاز</text>
        <text x="407" y="205">طول لوله</text><text x="385" y="205">۱۲۵</text><text x="375" y="205">۲۴۰</text>
        <text x="407" y="209">افت فشار</text><text x="385" y="209">۱۸۰</text><text x="375" y="209">۳۶۰</text>
        <text x="407" y="213">ورودی</text><text x="385" y="213">۲۱۰</text><text x="375" y="213">۴۰۰</text>
        <text x="407" y="218">شرح</text><text x="395" y="218">عدد</text><text x="389" y="218">قطر</text><text x="383" y="218">حد</text><text x="377" y="218">متر</text><text x="371" y="218">کد</text>
        <text x="408" y="222">شیر گرد</text><text x="408" y="225">دوم</text>
        <text x="408" y="228">زانو</text><text x="408" y="231">نود درجه</text>
        <text x="408" y="234">سه راهی</text><text x="408" y="237">جوشی</text>
        <text x="408" y="240">لوله</text><text x="408" y="243">چهارم</text>
        <text x="408" y="246">تبدیل</text><text x="408" y="249">یک اینچ</text>
        <text x="408" y="252">درپوش</text><text x="408" y="255">نیم اینچ</text>
        <text x="408" y="258">بست لوله</text><text x="408" y="261">دیواری</text>
        <text x="408" y="264">نوار</text><text x="408" y="267">پرایمر</text>
        <text x="408" y="270">شیر قطع</text><text x="408" y="273">کننده</text>
        <text x="408" y="278">مهره</text><text x="406" y="284">رگلاتور</text><text x="407" y="290">جمع کل</text><text x="388" y="290">متراژ</text>
        <text x="402" y="295">نشانی ملک</text><text x="402" y="299">مرکزی</text><text x="402" y="303">پلاک</text>
        <text x="407" y="307">ناظر</text><text x="392" y="307">کارفرما</text><text x="376" y="307">مهر</text>
        <text x="0" y="0" text-anchor="middle" transform="translate(407 148) rotate(-90)">شرکت</text>
        <text x="0" y="0" text-anchor="middle" transform="translate(407 160) rotate(-90)">مالک</text>
        <text x="0" y="0" text-anchor="middle" transform="translate(407 173) rotate(-90)">مهندس</text>
        <text x="0" y="0" text-anchor="middle" transform="translate(407 297) rotate(-90)">نشانی</text>
    </g>
    <g class="qty" text-anchor="middle">
        <text x="392.500" y="224">۱۰</text><text x="392.500" y="230">۱</text><text x="392.500" y="236">۲</text><text x="392.500" y="242">۳</text><text x="392.500" y="248">۴</text><text x="392.500" y="254">۲</text><text x="392.500" y="260">۶</text><text x="392.500" y="272">۸</text><text x="392.500" y="278">۱</text><text x="392.500" y="284">۱</text>
    </g>
    <path d="M391 262h3v3l-1.500 2-1.500-2z" fill="#fff"/>

    <!-- crosshair cursor -->
    <g class="line">
        <path d="M473 166.500h15.500M493 166.500h16M490.500 149v15.500M490.500 169v16"/>
        <rect x="488.500" y="164.500" width="4" height="4"/>
    </g>

    <!-- ucs icon -->
    <path class="ucs" d="M0 347.500h5M7.500 341l5.500 6M13 341l-5.500 6"/>

    <!-- view cube -->
    <circle cx="644" cy="124" r="20" fill="none" stroke="#464c57" stroke-width="4"/>
    <path d="M635 115h12v19h-12z" fill="#b9babc"/>
    <text class="compass" x="619.500" y="127">W</text>
    <rect x="634" y="157" width="20" height="7" rx="1" fill="#9b9eac"/>
    <text class="wcs" x="635" y="162.500">WCS</text>
</svg>
</div>

<section class="command">
    <div class="history"><p>Command:</p><p>Command:</p><p>Command: _qsave</p></div>
    <input type="text" placeholder="&gt;- Type a command" aria-label="Command line">
</section>

<footer class="statusbar">
    <nav class="layouts">
        <a href="#" class="current">Model</a>
        <a href="#">Layout1</a><span class="slash">/</span>
        <a href="#">Layout2</a><span class="slash">/</span>
        <button aria-label="New layout"><svg class="add"><use href="#plus"/></svg></button><span class="slash">/</span>
    </nav>
    <div class="toggles">
        <button class="space">MODEL</button>
        <button class="on" aria-label="Grid"><svg class="ico"><use href="#sgrid"/></svg></button>
        <button aria-label="Snap"><svg class="ico"><use href="#ssnap"/></svg></button>
        <svg class="caret"><use href="#caret"/></svg>
        <button aria-label="Ortho"><svg class="ico"><use href="#sortho"/></svg></button>
        <button aria-label="Polar"><svg class="ico"><use href="#spolar"/></svg></button>
        <svg class="caret"><use href="#caret"/></svg>
        <button aria-label="Isometric"><svg class="ico"><use href="#siso"/></svg></button>
        <svg class="caret"><use href="#caret"/></svg>
        <button class="on" aria-label="Tracking"><svg class="ico"><use href="#strack"/></svg></button>
        <button class="on" aria-label="Object Snap"><svg class="ico"><use href="#sosnap"/></svg></button>
        <svg class="caret"><use href="#caret"/></svg>
        <button aria-label="Lineweight"><svg class="ico"><use href="#slw"/></svg></button>
        <button class="on" aria-label="Annotation Visibility"><svg class="ico"><use href="#sanno"/></svg></button>
        <button aria-label="Auto Scale"><svg class="ico"><use href="#sanno"/></svg></button>
        <button aria-label="Annotation Scale"><svg class="ico"><use href="#sanno"/></svg></button>
        <button>1:1</button>
        <svg class="caret"><use href="#caret"/></svg>
        <button aria-label="Workspace"><svg class="ico"><use href="#sgear"/></svg></button>
        <svg class="caret"><use href="#caret"/></svg>
        <button aria-label="Annotation Monitor"><svg class="ico"><use href="#plus"/></svg></button>
        <button aria-label="Isolate Objects"><svg class="ico"><use href="#sisolate"/></svg></button>
        <button aria-label="Graphics Performance"><svg class="ico"><use href="#sgpu"/></svg></button>
    </div>
</footer>

</body>
</html>
```
FILE: styles.css
```css
* {
    box-sizing: border-box;
}

body {
    margin: 0;
    height: 100vh;
    display: flex;
    flex-direction: column;
    overflow: hidden;
    background-color: #222933;
    color: #dfe2e5;
    font-family: "Noto Sans", "Open Sans", sans-serif;
    font-size: 5px;
    line-height: 7px;
}

a {
    color: inherit;
    text-decoration: none;
}

button, input, select {
    font: inherit;
    color: inherit;
    background: none;
    border: 0;
    padding: 0;
    margin: 0;
    min-width: 0;
}

button {
    display: flex;
    align-items: center;
    justify-content: center;
    white-space: nowrap;
}

svg {
    flex: none;
    display: block;
}

.sprite {
    position: absolute;
    width: 0;
    height: 0;
}

.ico {
    width: 8px;
    height: 8px;
}

.caret {
    width: 3px;
    height: 3px;
}

.dim {
    opacity: 0.4;
}

/* title bar */
.titlebar {
    display: grid;
    grid-template-columns: 225fr 170fr 245fr;
    align-items: center;
    height: 13px;
    flex: none;
}

.quick {
    display: flex;
    align-items: center;
    gap: 3px;
    padding-left: 2px;
}

.more-btn {
    padding: 0 1px;
}

.more {
    width: 4px;
    height: 6px;
}

.share {
    display: flex;
    align-items: center;
    gap: 1px;
    color: #5db8ee;
}

.doc-title {
    display: flex;
    gap: 8px;
    white-space: nowrap;
}

.account {
    display: flex;
    align-items: center;
    gap: 3px;
    padding-left: 4px;
}

.tri {
    border: 2px solid transparent;
    border-left-color: #d5d9de;
    margin-right: -2px;
}

.search {
    width: 83px;
    height: 9px;
    background-color: #434b5b;
    padding: 0 1px;
}

.search::placeholder {
    color: #b9bec6;
    font-style: italic;
    opacity: 1;
}

.signin {
    gap: 2px;
}

.gap-left {
    margin-left: 18px;
}

.sep {
    width: 1px;
    height: 8px;
    background-color: #3c4452;
}

.minimize {
    width: 5px;
    height: 1px;
    background-color: #8a919b;
    margin-left: auto;
}

.account .minimize {
    margin: 0 17px 0 auto;
}

/* menus */
.menubar {
    display: flex;
    align-items: center;
    gap: 10px;
    height: 10px;
    padding-left: 8px;
    flex: none;
    border-bottom: 1px solid #2b323e;
    color: #b3b8c0;
}

.ribbon-tabs {
    display: flex;
    align-items: center;
    gap: 10px;
    height: 11px;
    margin-left: -8px;
    flex: none;
    color: #b3b8c0;
    white-space: nowrap;
}

.ribbon-toggle {
    gap: 2px;
    padding-left: 3px;
}

.ribbon-toggle span {
    width: 7px;
    height: 4px;
    border: 1px solid #e4e6e8;
    background-color: #aab0b8;
}

/* ribbon */
.ribbon {
    display: grid;
    grid-template-columns: 99fr 101fr 68fr 127fr 55fr 103fr 32fr 44fr 43fr;
    height: 46px;
    margin-left: -32px;
    flex: none;
    background-color: #3b4453;
}

.panel {
    display: flex;
    flex-direction: column;
    min-width: 0;
    border-right: 1px solid #2b323e;
}

.panel h2 {
    display: flex;
    align-items: center;
    justify-content: center;
    gap: 3px;
    margin: 0;
    height: 9px;
    font-size: 5px;
    font-weight: normal;
    background-color: #39414f;
}

.tools {
    display: flex;
    flex: 1;
    padding: 2px 0 0 1px;
}

.right {
    justify-content: flex-end;
}

.big {
    flex-direction: column;
    justify-content: flex-start;
    width: 21px;
}

.big .pic {
    width: 16px;
    height: 16px;
    margin-bottom: 2px;
}

.big .caret {
    margin-top: 1px;
}

.wide {
    width: 29px;
}

.slim {
    width: 18px;
}

.stack {
    display: flex;
    flex-direction: column;
    gap: 2px;
    padding: 1px 0 0 1px;
}

.stack button {
    justify-content: flex-start;
    gap: 3px;
    height: 9px;
    padding-right: 3px;
}

.stack .on {
    padding: 0 1px;
    outline: 1px solid #5b9bd0;
    background-color: #3e5d78;
}

.modify {
    display: grid;
    grid-template-columns: 34px 32px 19px 12px;
    grid-auto-rows: 9px;
    gap: 2px 0;
    padding: 3px 0 0 3px;
}

.modify button {
    justify-content: flex-start;
    gap: 2px;
}

.combo {
    display: flex;
    align-items: center;
    gap: 2px;
    height: 9px;
    padding: 0 2px;
    background-color: #4a5568;
}

.combo select {
    flex: 1;
    appearance: none;
    height: 9px;
}

.swatch {
    width: 7px;
    height: 7px;
    background-color: #fff;
}

.sample {
    flex: 1;
    height: 1px;
    background-color: #aeb4bc;
}

.sample + select {
    flex: none;
}

.layer-tools {
    display: flex;
    flex-direction: column;
    flex: 1;
    gap: 3px;
    padding-right: 2px;
}

.layer-tools .combo {
    height: 10px;
    gap: 1px;
}

.layer-row {
    display: flex;
    gap: 3px;
}

.props {
    display: grid;
    grid-template-columns: 8px 1fr;
    grid-auto-rows: 9px;
    align-items: center;
    flex: 1;
    gap: 2px 1px;
    padding: 1px 1px 0 0;
}

.wheel {
    width: 8px;
    height: 8px;
    border-radius: 50%;
    background: conic-gradient(#f2c14e, #e8574a, #b65bd0, #4b7fe0, #3fb6c9, #58c15c, #f2c14e);
}

/* drawing tabs */
.file-tabs {
    display: flex;
    align-items: center;
    gap: 5px;
    height: 12px;
    margin-left: -9px;
    flex: none;
}

.file-tabs .current {
    display: flex;
    align-items: center;
    gap: 4px;
    height: 12px;
    padding: 0 5px 0 6px;
    background-color: #3b4453;
    color: #fff;
    font-weight: bold;
    clip-path: polygon(10% 0, 100% 0, 90% 100%, 0 100%);
}

.x {
    width: 5px;
    height: 5px;
}

.add {
    width: 7px;
    height: 7px;
}

.slash {
    color: #7a8492;
    font-size: 7px;
}

/* drawing area */
.canvas {
    flex: 1;
    min-height: 0;
    border-top: 2px solid #363f4d;
    border-bottom: 2px solid #434b59;
    background-color: #212830;
}

.drawing {
    width: 100%;
    height: 100%;
}

.line {
    fill: none;
    stroke: #c4c7cb;
    stroke-width: 0.8px;
}

.pipe {
    fill: none;
    stroke: #b4b8bd;
    stroke-width: 0.8px;
}

.ucs {
    fill: none;
    stroke: #8e949c;
}

.label {
    fill: #b9bdc3;
    font-size: 6px;
}

.tiny, .cell, .qty {
    font-family: "DejaVu Sans", sans-serif;
    font-size: 3px;
    fill: #c9ccd0;
}

.cell {
    font-weight: bold;
    fill: #fff;
    direction: rtl;
}

.note {
    font-family: "DejaVu Sans", sans-serif;
    font-size: 5px;
    fill: #dfe2e5;
}

.dim-text {
    font-family: "Liberation Sans", sans-serif;
    font-size: 6px;
    fill: #d3e6f7;
}

.blue, .qty {
    fill: #a8c8e4;
}

.compass {
    font-family: "Liberation Sans", sans-serif;
    font-size: 8px;
    font-weight: bold;
    fill: #c9cbce;
}

.wcs {
    font-size: 5px;
    fill: #eceef0;
}

/* command line */
.command {
    flex: none;
    font-family: "Liberation Mono", monospace;
    font-size: 6px;
    border-bottom: 2px solid #39414f;
}

.history {
    display: flex;
    flex-direction: column;
    justify-content: flex-end;
    height: 17px;
    overflow: hidden;
    background-color: #c6c6c6;
    color: #1d1d1d;
}

.history p {
    margin: 0 0 0 -15px;
}

.command input {
    display: block;
    width: 100%;
    height: 9px;
    padding: 0;
    text-indent: -7px;
    background-color: #fff;
    border-top: 1px solid #8c8c8c;
}

.command input::placeholder {
    color: #6d6d6d;
    font-style: italic;
    opacity: 1;
}

/* status bar */
.statusbar {
    display: flex;
    justify-content: space-between;
    height: 15px;
    flex: none;
}

.layouts {
    display: flex;
    align-items: center;
    gap: 5px;
    margin-left: -10px;
}

.layouts .current {
    height: 15px;
    padding: 4px 5px 0 2px;
    background-color: #3b4453;
    color: #fff;
    font-weight: bold;
    clip-path: polygon(0 0, 100% 0, 80% 100%, 0 100%);
}

.layouts button {
    padding: 0 1px;
}

.toggles {
    display: flex;
    align-items: center;
    justify-content: space-between;
    width: 40%;
    height: 13px;
    padding: 0 4px 0 1px;
    margin-top: 1px;
    background-color: #333c4a;
}

.toggles button {
    width: 10px;
    height: 11px;
}

.toggles .space {
    width: 22px;
}

.toggles .on {
    background-color: #5588c0;
}
```
